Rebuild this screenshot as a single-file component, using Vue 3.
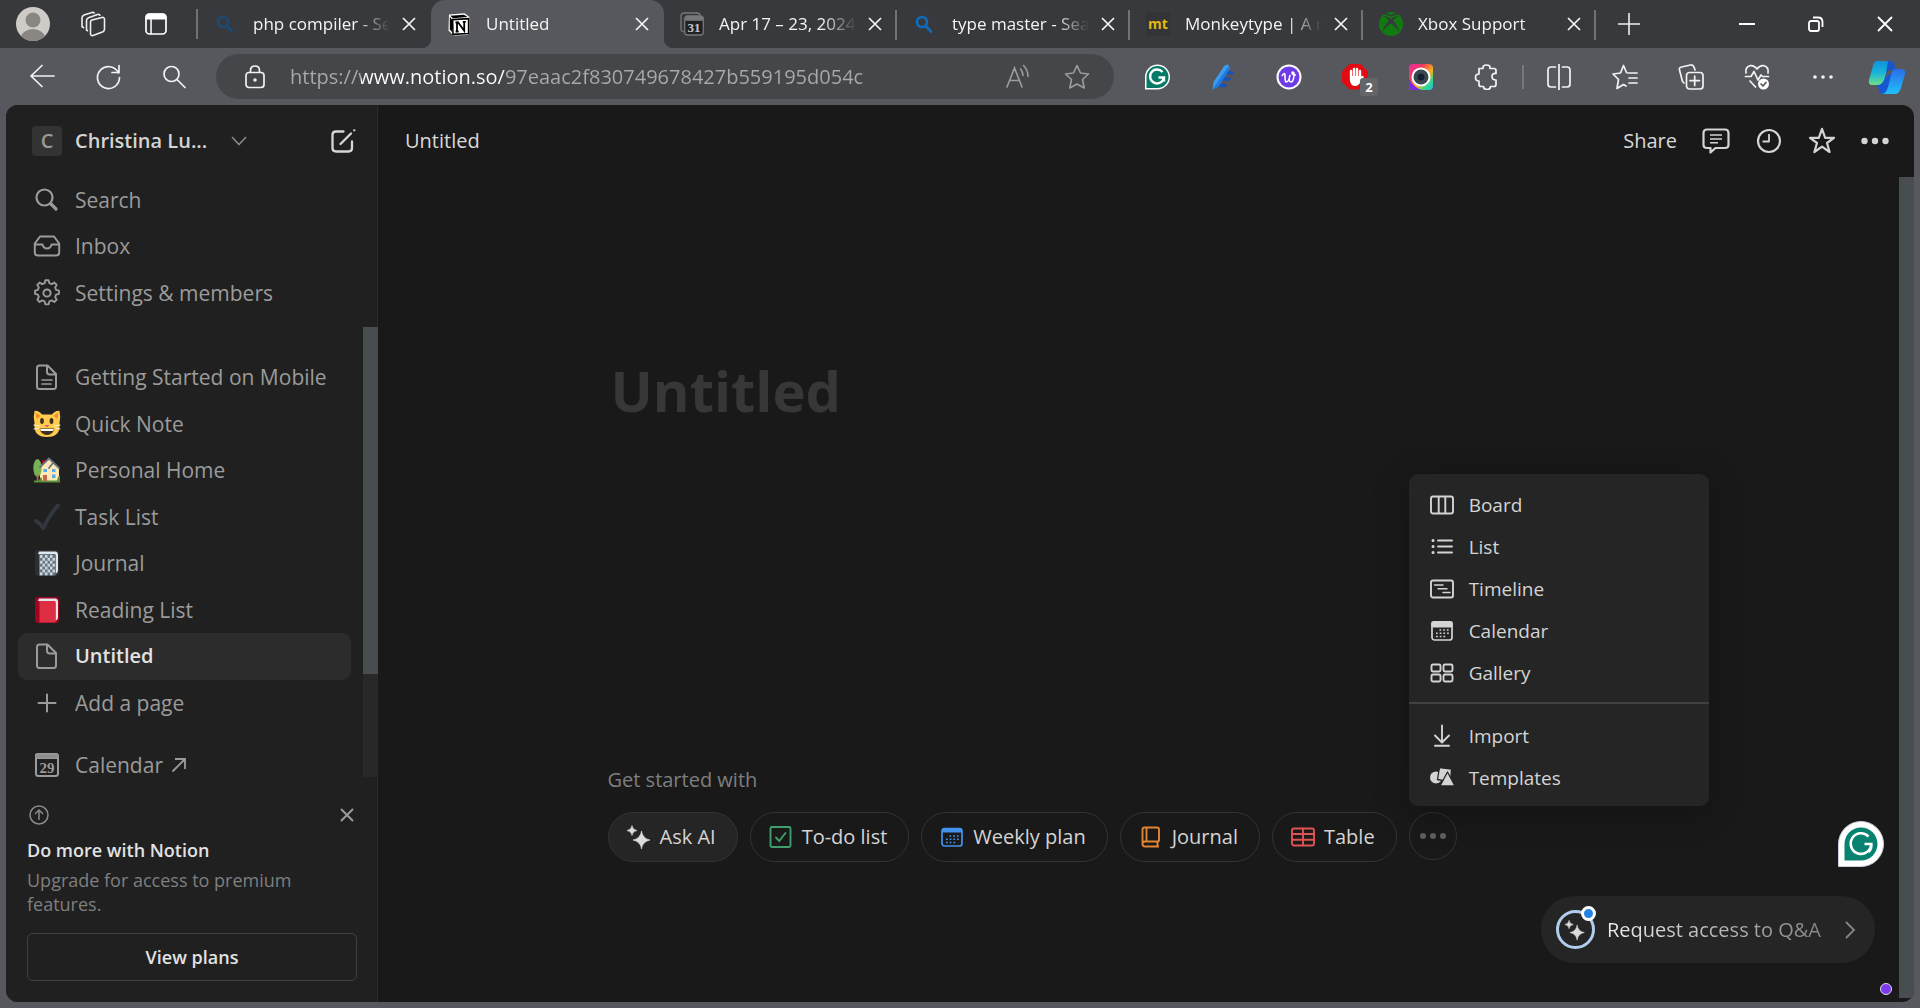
<script setup>
import { ref } from 'vue'

const address = ref('https://www.notion.so/97eaac2f830749678427b559195d054c')

const magnifier = (c) =>
  `<g fill="none" stroke="${c}" stroke-width="2.6" stroke-linecap="round"><circle cx="9" cy="10" r="5"/><path d="M12.8 14L18 19.5"/></g>`

const tabs = [
  { title: 'php compiler - Search', icon: magnifier('#1d4a75') },
  {
    title: 'Untitled', active: true,
    icon: '<path d="M2 2.5L17.5 1.2L22.5 5V21.5L20.5 23L6.5 23.5L1.5 18.5Z" fill="#fff"/><path d="M3.2 3.8L17 2.7L20.5 5L6 6.2Z" fill="#000"/><path d="M5.6 7.6L21.6 6.6V21.6L6 22.4Z" fill="#fff" stroke="#000" stroke-width="1.6"/><path d="M2.8 5L5 7.5V20L2.8 17.5Z" fill="#000"/><path d="M8.5 10.5L11 10.2L17.2 18.8V10.2M10 10.5V19.4M8.6 19.5H11.6M15.8 9.9H18.8M17.2 19V10" fill="none" stroke="#000" stroke-width="1.8"/>',
  },
  {
    title: 'Apr 17 – 23, 2024 · Calendar',
    icon: '<g fill="none" stroke="#77787b" stroke-width="1.3"><path d="M4 20L2.5 19.5Q1 19 1 17V4Q1 1 4 1H17Q20 1 20 3.5"/><rect x="4.7" y="4" width="18.6" height="19" rx="3" fill="#202124"/><path d="M5 8H23"/></g><rect x="5" y="4" width="18" height="4.5" rx="2" fill="#77787b"/><text x="14" y="20" text-anchor="middle" font-family="Liberation Serif" font-weight="700" font-size="13" fill="#c8c8ca">31</text>',
  },
  { title: 'type master - Search', icon: magnifier('#0f6cbd') },
  {
    title: 'Monkeytype | A minimalistic typing test',
    icon: '<rect width="24" height="24" rx="4" fill="#323437"/><text x="12" y="17" text-anchor="middle" font-family="Open Sans" font-weight="700" font-size="14" fill="#e2b714">mt</text>',
  },
  {
    title: 'Xbox Support',
    icon: '<circle cx="12" cy="12" r="12" fill="#107c10"/><path d="M5.500 2Q9 2 12 4Q15 2 18.500 2" fill="none" stroke="#38393d" stroke-width="1.300"/><path d="M3.400 20.500Q4.500 14 10 8.500Q7 5 4 4.500Q8 3.500 12 6.800Q16 3.500 20 4.500Q17 5 14 8.500Q19.500 14 20.600 20.500Q17.500 15 12 11.500Q6.500 15 3.400 20.500" fill="#38393d"/>',
  },
]

const mainLinks = [
  { label: 'Search', icon: '<circle cx="11.5" cy="11.5" r="8" stroke-width="2.2"/><path d="M18 18L23 23" stroke-width="3.2"/>' },
  { label: 'Inbox', icon: '<path d="M7 4.5H21L26.2 11.5V20.5Q26.2 23.5 23 23.5H5Q1.8 23.5 1.8 20.5V11.5ZM2 12.5H9.5Q10.5 16.5 14 16.5T18.500 12.5H26" stroke-width="2"/>' },
  { label: 'Settings & members', icon: '<path d="M12.300 2h3.400l.8 3.100 2.500 1 2.800-1.600 2.400 2.400-1.600 2.800 1 2.500 3 .8v3.400l-3 .8-1 2.500 1.600 2.800-2.400 2.400-2.800-1.600-2.500 1-.8 3.100h-3.400l-.8-3.100-2.500-1-2.800 1.600-2.400-2.400 1.600-2.800-1-2.500-3-.8v-3.400l3-.8 1-2.500-1.600-2.800 2.400-2.400 2.800 1.600 2.500-1z" transform="translate(.7 -.7) scale(.95)" stroke-width="2"/><circle cx="14" cy="14" r="3.600" stroke-width="2"/>' },
]

const sheet = '<path d="M7 2.500H14.500L23 11V23.500Q23 26 20.500 26H6.500Q4 26 4 23.500V5Q4 2.500 6.500 2.500ZM14 3V8.500Q14 11.500 16.500 11.500H22.500" stroke-width="2"/>'
const book = (dark, cover, fill) =>
  `<rect x="2" y="1" width="24" height="26" rx="3" fill="${dark}" stroke="none"/><path d="M6 2.500H22Q25 2.500 25 6V22Q24.500 24 22.500 25V6Q22.500 5 21 5H5Z" fill="#e1e8ed" stroke="none"/><path d="M6 5H20.500Q22.500 5 22.500 7V26.500H6Z" fill="${cover}" stroke="none"/>${fill}`
const checker = Array.from({ length: 42 }, (_, i) =>
  i % 2 ? '' : `<rect x="${7 + ((i % 6) + (Math.floor(i / 6) % 2)) * 2.5}" y="${6 + Math.floor(i / 6) * 2.900}" width="2.500" height="2.900" fill="#ccd6dd" stroke="none"/>`).join('')

const pages = [
  { label: 'Getting Started on Mobile', icon: sheet + '<path d="M9 17H19M9 21H18" stroke-width="1.700"/>' },
  {
    label: 'Quick Note',
    icon: '<g stroke="none"><path d="M1.500 1Q5 0 9 4.500H19Q23 0 26.500 1Q28 7 26.500 13Q28 27 14 27T1.500 13Q0 7 1.500 1Z" fill="#ffcc4d"/><path d="M2.500 3Q5 3.500 7.500 6L3.500 9ZM25.500 3Q23 3.500 20.500 6L24.500 9Z" fill="#f18f26"/><ellipse cx="9" cy="11" rx="1.900" ry="3" fill="#402e1f"/><ellipse cx="18.500" cy="11" rx="1.900" ry="3" fill="#402e1f"/><path d="M11.500 15H16.500L14 17.500Z" fill="#e75a70"/><path d="M6.500 18.500H21.500Q20 25 14 25T6.500 18.500Z" fill="#402e1f"/><path d="M7 19H21L20 21H8Z" fill="#fff"/></g><path d="M1 15L7 16M1 19L6 18M27 15L21 16M27 19L22 18" stroke="#fff3d0" stroke-width="1"/>',
  },
  {
    label: 'Personal Home',
    icon: '<g stroke="none"><rect x="9" y="4" width="3" height="7" fill="#a0041e"/><path d="M7 12L16 3L26 12V25H7Z" fill="#ffe8b6"/><ellipse cx="4.500" cy="12" rx="4.200" ry="9" fill="#77b255"/><rect x="3.800" y="18" width="1.600" height="8" fill="#c1694f"/><path d="M1 24.500H27V26.500H1Z" fill="#5c913b"/><rect x="10" y="19" width="4" height="6" fill="#c1694f"/><path d="M10.500 13H14V16H10.500ZM19 13H22.500V16H19ZM19 18.500H22.500V22H19Z" fill="#55acee"/><path d="M24 25Q25 19 27 20V26H24ZM6 25Q7 20 9 22V26H6Z" fill="#5c913b"/></g><path d="M7 11L16 2.500L26 12M20 7L16 12" stroke="#66757f" stroke-width="1.800"/>',
  },
  { label: 'Task List', icon: '<path d="M3 18Q7 20 10.500 25Q16 12 25 2.500" stroke="#31373d" stroke-width="4"/>' },
  { label: 'Journal', icon: book('#292f33', '#66757f', checker) },
  { label: 'Reading List', icon: book('#a0041e', '#dd2e44', '<path d="M6.500 6V26" stroke="#bb1c36" stroke-width="1"/>') },
  { label: 'Untitled', icon: sheet, active: true },
  { label: 'Add a page', icon: '<path d="M14 5.500V22.500M5.500 14H22.500" stroke-width="2"/>' },
]

const calendarIcon = (c) =>
  `<rect x="2" y="3.500" width="20" height="17.500" rx="2.500" fill="none" stroke="${c}" stroke-width="1.700"/><rect x="2" y="3" width="20" height="4.500" rx="1.500" fill="${c}"/><path d="M9.500 11H20M6 14.200H20M6 17.500H16" fill="none" stroke="${c}" stroke-width="1.600" stroke-linecap="butt" stroke-dasharray="1.700 2"/>`

const views = [
  { label: 'Board', icon: '<rect x="1" y="3.500" width="22" height="17" rx="2"/><path d="M8.700 4V20M15.300 4V20"/>' },
  { label: 'List', icon: '<path d="M8 5.500H22M8 11.500H22M8 17.500H22"/><path d="M3 5.500h.1M3 11.500h.1M3 17.500h.1" stroke-width="3"/>' },
  { label: 'Timeline', icon: '<rect x="1" y="3.500" width="22" height="17" rx="2"/><path d="M4.500 8H13M8 11.700H17M13 15.500H20" stroke-width="1.500"/>' },
  { label: 'Calendar', icon: calendarIcon('#d4d4d4') },
  { label: 'Gallery', icon: '<rect x="1.500" y="3.500" width="9" height="7" rx="1.500"/><rect x="13.500" y="3.500" width="9" height="7" rx="1.500"/><rect x="1.500" y="13.500" width="9" height="7" rx="1.500"/><rect x="13.500" y="13.500" width="9" height="7" rx="1.500"/>' },
]
const actions = [
  { label: 'Import', icon: '<path d="M12 1.500V18M5 11.500L12 18.500L19 11.500M5 21.700H19"/>' },
  { label: 'Templates', icon: '<g fill="#d4d4d4" stroke="none"><circle cx="6" cy="11.500" r="6"/><path d="M9.500 1.500L21.500 3L20.500 16L7.500 13.500Z" stroke="#252525" stroke-width="1.300"/><path d="M17.500 6L25 20H10Z" stroke="#252525" stroke-width="1.300"/></g>' },
]

const sparkle = '<path d="M15.500 7Q16.500 14.500 24 16Q16.500 17.500 15.500 25Q14.500 17.500 7 16Q14.500 14.500 15.500 7ZM6 1.500Q6.700 5.800 11 6.500Q6.700 7.200 6 11.500Q5.300 7.200 1 6.500Q5.300 5.800 6 1.500Z" fill="#dcdcdc" stroke="#dcdcdc" stroke-width=".6"/>'
const starters = [
  { label: 'Ask AI', icon: `<g transform="translate(-1 -1)">${sparkle}</g>`, kind: 'filled' },
  { label: 'To-do list', icon: '<g fill="none" stroke="#3f9e6b" stroke-width="1.900" stroke-linecap="round"><rect x="1.500" y="2" width="20" height="20" rx="1.500"/><path d="M7 12.500L10.200 16L16.500 8"/></g>' },
  { label: 'Weekly plan', icon: calendarIcon('#4493ee') },
  { label: 'Journal', icon: '<g fill="none" stroke="#e08535" stroke-width="1.900"><path d="M20 16.500H6Q3.500 16.500 3.500 19T6 21.500H20M18.500 17V21M3.500 19V4.500Q3.500 2.500 5.500 2.500H18Q20 2.500 20 4.500V16.500M7.500 3V16.500"/></g>' },
  { label: 'Table', icon: '<g fill="none" stroke="#df5452" stroke-width="1.900"><rect x="1" y="3.500" width="22" height="17" rx="2"/><path d="M1 9H23M1 14.800H23M12 4V20"/></g>' },
]
</script>

<template>
  <div class="window">
    <header class="tabstrip">
      <div class="tools">
        <button class="plain avatar" aria-label="Profile">
          <svg width="34" height="34" viewBox="0 0 34 34"><clipPath id="face"><circle cx="17" cy="17" r="17" /></clipPath><g clip-path="url(#face)"><rect width="34" height="34" fill="#cfccc8" /><circle cx="17" cy="13" r="7.500" fill="#8a8681" /><ellipse cx="17" cy="32" rx="12.500" ry="10" fill="#8a8681" /></g></svg>
        </button>
        <button class="plain spaces" aria-label="Workspaces">
          <svg width="26" height="26" viewBox="0 0 26 26" fill="none" stroke="#eee" stroke-width="1.600" stroke-linejoin="round"><path d="M10.500 11Q10.500 9.500 12 9L22 6.500Q24.500 6 24.500 8.500V18Q24.500 20 23 20.800L13 24.500Q10.500 25 10.500 22.500ZM8 20L6.500 19V9.500Q6.500 7.500 8.500 6.700L17.500 3.500Q20 3 20 5M4 17L2 15.500V7Q2 5 4 4L12 1.500Q14 1 14.500 2.500" /></svg>
        </button>
        <button class="plain" aria-label="Tab actions">
          <svg width="24" height="24" viewBox="0 0 24 24"><rect x="2" y="2" width="20" height="20" rx="3.500" fill="none" stroke="#fff" stroke-width="1.700" /><path d="M1.500 7.500V5Q1.500 1.500 5 1.500H19Q22.500 1.500 22.500 5V7.500ZM6.300 7H7.800V22H6.300Z" fill="#fff" /></svg>
        </button>
      </div>
      <nav class="tabs">
        <div v-for="(tab, i) in tabs" :key="i" class="tab" :class="{ active: tab.active, quiet: i === 0 }">
          <svg class="favicon" width="24" height="24" viewBox="0 0 24 24" v-html="tab.icon"></svg>
          <span class="tab-title">{{ tab.title }}</span>
          <button class="plain" :aria-label="'Close ' + tab.title">
            <svg width="14" height="14" viewBox="0 0 14 14" stroke="#f4f4f4" stroke-width="1.700"><path d="M1 1L13 13M13 1L1 13" /></svg>
          </button>
        </div>
      </nav>
      <button class="plain new-tab" aria-label="New tab">
        <svg width="22" height="22" viewBox="0 0 22 22" stroke="#eee" stroke-width="1.600"><path d="M11 0V22M0 11H22" /></svg>
      </button>
      <div class="controls">
        <button class="plain" aria-label="Minimize"><svg width="16" height="16" viewBox="0 0 16 16" stroke="#fff" stroke-width="2"><path d="M0 8H16" /></svg></button>
        <button class="plain" aria-label="Restore"><svg width="16" height="16" viewBox="0 0 16 16" fill="none" stroke="#fff" stroke-width="1.800"><rect x="1" y="5" width="10" height="10" rx="2" /><path d="M5 1.500H10Q14.500 1.500 14.500 6V11" /></svg></button>
        <button class="plain" aria-label="Close"><svg width="16" height="16" viewBox="0 0 16 16" stroke="#fff" stroke-width="1.800"><path d="M1 1L15 15M15 1L1 15" /></svg></button>
      </div>
    </header>

    <div class="toolbar">
      <button class="plain tool" aria-label="Back"><svg width="26" height="26" viewBox="0 0 26 26" class="line"><path d="M25 12H2M13 1.500L2 12L13 22.500" /></svg></button>
      <button class="plain tool" aria-label="Refresh"><svg width="26" height="26" viewBox="0 0 26 26" class="line"><path d="M23.500 9A11 11 0 1 0 24.500 13.500M24 1.500V8.500H17" /></svg></button>
      <button class="plain tool" aria-label="Search"><svg width="26" height="26" viewBox="0 0 26 26" class="line"><circle cx="10.500" cy="10" r="7.500" /><path d="M16 15.500L24 23.500" /></svg></button>
      <div class="address">
        <svg width="24" height="24" viewBox="0 0 24 24" fill="none" stroke="#f2f2f2" stroke-width="1.700"><rect x="3" y="7.500" width="18" height="15" rx="3" /><path d="M7.500 7V5.500Q7.500 1 12 1T16.500 5.500V7" /><circle cx="12" cy="15" r=".9" fill="#f2f2f2" /></svg>
        <input v-model="address" aria-label="Address" class="url" type="text" spellcheck="false" />
        <button class="plain" aria-label="Read aloud"><svg width="26" height="26" viewBox="0 0 26 26" fill="none" stroke="#9b9c9e" stroke-width="1.600" stroke-linecap="round"><path d="M2 23L9.500 4L17 23M4.500 16.500H14.500M15.500 5Q18 8 18 11.500M18.500 1.500Q23 6 23 12.500" /></svg></button>
        <button class="plain star" aria-label="Add favorite"><svg width="26" height="26" viewBox="0 0 26 26" fill="none" stroke="#9b9c9e" stroke-width="1.600" stroke-linejoin="round"><path d="M13 1.500L16.500 9L24.500 10L18.500 15.500L20.200 24L13 20L5.800 24L7.500 15.500L1.500 10L9.500 9Z" /></svg></button>
      </div>
      <div class="extensions">
        <button class="plain tool" aria-label="Grammarly"><svg width="26" height="26" viewBox="0 0 26 26"><path d="M1 25.500V13A12.500 12.500 0 1 1 13.500 25.500Z" fill="#fff" /><path d="M2.500 24V13A11 11 0 1 1 13.500 24Z" fill="#077a67" /><path d="M18.500 8A7 7 0 1 0 20 13.500H14.500M20 13.500V17.500" fill="none" stroke="#fff" stroke-width="2.400" /></svg></button>
        <button class="plain tool" aria-label="Writing assistant"><svg width="26" height="26" viewBox="0 0 26 26"><path d="M14 9H22M12 15H19M9 21.500H15" stroke="#1653b8" stroke-width="3.500" stroke-linecap="round" /><path d="M14.500 1.500L18 .5L20 4L8.500 22.500L2.500 25.500L3.500 18Z" fill="#3c9cf0" /><path d="M18.500 2L20 4L8.500 22.500L2.500 25.500Z" fill="#1f7be0" /></svg></button>
        <button class="plain tool" aria-label="Wordtune"><svg width="26" height="26" viewBox="0 0 26 26"><circle cx="13" cy="13" r="12.500" fill="#fff" /><circle cx="13" cy="13" r="10.500" fill="#6d3be8" /><path d="M6 12Q9 7 9 12T10 18Q13 18 14 11Q12 18 15 18T18 9Q16 7 16 9T20 11" fill="none" stroke="#fff" stroke-width="1.600" /></svg></button>
        <button class="plain tool blocker" aria-label="AdBlock, 2 blocked">
          <svg width="26" height="26" viewBox="0 0 26 26"><path d="M7.500 0H18.500L26 7.500V18L18.500 25.500H7.500L0 18V7.500Z" fill="#e30b12" /><path d="M9 15V7M12 13V5M15 13V5M18 14V7M18 17L20.500 13" stroke="#fff" stroke-width="2.400" stroke-linecap="round" /><path d="M8 12H19V17Q17 22 13 22T8 17Z" fill="#fff" /></svg>
          <span class="count">2</span>
        </button>
        <button class="plain tool" aria-label="Camera"><svg width="26" height="26" viewBox="0 0 26 26"><defs><linearGradient id="rainbow" x1="0" y1="0" x2="1" y2="1"><stop offset="0" stop-color="#f02ba8" /><stop offset=".3" stop-color="#f0385c" /><stop offset=".6" stop-color="#f5b21e" /><stop offset=".8" stop-color="#30d890" /><stop offset="1" stop-color="#20b8f0" /></linearGradient></defs><rect x="1" width="24" height="26" rx="4" fill="url(#rainbow)" /><path d="M1 15Q6 24 14 26H5Q1 26 1 22Z" fill="#7a2be8" /><circle cx="13" cy="13" r="9.500" fill="#fff" /><circle cx="13" cy="13" r="7.500" fill="#3a4650" /><circle cx="13" cy="13" r="3.500" fill="#14202c" /></svg></button>
        <button class="plain tool" aria-label="Extensions"><svg width="26" height="26" viewBox="0 0 26 26" class="line"><path d="M5 4.500H9Q8.500 1 12.500 1T16 4.500H20Q22 4.500 22 6.500V9.500Q18 9 18 12.500T22 16V20.500Q22 22.500 20 22.500H16.500Q16.500 25.500 13 25.500T9.500 22.500H7Q5 22.500 5 20.500V17Q1.500 17 1.500 13.500T5 10Z" /></svg></button>
        <span class="rule"></span>
        <button class="plain tool" aria-label="Split screen"><svg width="26" height="26" viewBox="0 0 26 26" class="line"><path d="M9.500 3H5Q2 3 2 6V20Q2 23 5 23H9.500M16.500 3H21Q24 3 24 6V20Q24 23 21 23H16.500M13 0V26" /></svg></button>
        <button class="plain tool" aria-label="Favorites"><svg width="26" height="26" viewBox="0 0 26 26" class="line"><path d="M16 9H25M17 14H25M17 19H25M14.500 8.500L11.500 1.500L8.500 9L1 10L6.500 15.500L5 24.500L11.500 20.500L14 22" /></svg></button>
        <button class="plain tool" aria-label="Collections"><svg width="26" height="26" viewBox="0 0 26 26" class="line"><path d="M6 19L4.500 17.500L1.500 6Q1 3.500 3.500 3L12.500 1Q15 .5 16 3L17 6" /><rect x="8.500" y="8.500" width="16.500" height="16.500" rx="3" /><path d="M16.700 12V21.500M12 16.700H21.500" /></svg></button>
        <button class="plain tool" aria-label="Browser essentials"><svg width="26" height="26" viewBox="0 0 26 26" class="line"><path d="M2 9Q1 3 6 1.700Q10 1 13 5Q16 1 20 1.700Q25 3 24 9M1.500 12.500H7L10 7.500L14 16L17 11L18.500 12.500H24.500M6 17L11.500 23" /><circle cx="19.500" cy="20" r="5.500" fill="#fff" stroke="none" /><path d="M17 20L19 22L22 18.500" stroke="#57585d" /></svg></button>
        <button class="plain tool" aria-label="More"><svg width="26" height="26" viewBox="0 0 26 26" fill="#f2f2f2"><circle cx="5" cy="13" r="1.800" /><circle cx="13" cy="13" r="1.800" /><circle cx="21" cy="13" r="1.800" /></svg></button>
      </div>
      <button class="plain copilot" aria-label="Copilot"><svg width="38" height="34" viewBox="0 0 38 34"><defs><linearGradient id="c1" x1="0" y1="0" x2="0" y2="1"><stop offset="0" stop-color="#1291dc" /><stop offset=".5" stop-color="#18b5d8" /><stop offset="1" stop-color="#70e085" /></linearGradient><linearGradient id="c2" x1="0" y1="0" x2="0" y2="1"><stop offset="0" stop-color="#2b6ce8" /><stop offset="1" stop-color="#20c0fa" /></linearGradient></defs><path d="M12 20L26 12L18 34H14Q12 34 11 30L9 25Z" fill="#1757d0" /><path d="M9 1H25Q22 1 20 8L16 20Q14 25 9 25H4Q0 25 1 20L5 6Q6 1 9 1Z" fill="url(#c1)" /><path d="M20 1Q25 0 26.500 5L28 10H21L18 14Z" fill="#1656c8" /><path d="M27 9H33Q38 9 37 14L33 28Q31 34 27 34H14Q18 34 20 27L23 15Q24 9 27 9Z" fill="url(#c2)" /></svg></button>
    </div>

    <div class="app">
      <aside class="sidebar">
        <div class="workspace">
          <span class="badge">C</span>
          <button class="plain name">Christina Lu...
            <svg width="16" height="10" viewBox="0 0 16 10" fill="none" stroke="#858585" stroke-width="1.700"><path d="M1 1L8 8.500L15 1" /></svg>
          </button>
          <button class="plain compose" aria-label="New page"><svg width="26" height="26" viewBox="0 0 26 26" fill="none" stroke="#d6d6d6" stroke-width="2.300" stroke-linecap="round"><path d="M13.500 3.500H6Q2.500 3.500 2.500 7V20Q2.500 23.500 6 23.500H18.500Q22 23.500 22 20V13.500M10.500 16L21 5.500M24.200 2.300h.1" /></svg></button>
        </div>
        <nav class="links primary">
          <a v-for="l in mainLinks" :key="l.label" href="#" class="link"><svg width="28" height="28" viewBox="0 0 28 28" v-html="l.icon"></svg>{{ l.label }}</a>
        </nav>
        <div class="scroller">
          <div class="scroll-body">
            <nav class="links pages">
              <a v-for="l in pages" :key="l.label" href="#" class="link" :class="{ current: l.active }"><svg width="28" height="28" viewBox="0 0 28 28" v-html="l.icon"></svg>{{ l.label }}</a>
            </nav>
            <a href="#" class="link calendar">
              <svg width="28" height="28" viewBox="0 0 28 28"><rect x="3" y="3" width="22" height="22" rx="2.500" stroke-width="2" /><path d="M3 3H25V7.500H3Z" fill="#8f8f8f" /><text x="14" y="21.500" text-anchor="middle" font-family="Liberation Serif" font-weight="700" font-size="15" fill="#9b9b9b" stroke="none">29</text></svg>
              Calendar
              <svg class="out" width="16" height="16" viewBox="0 0 16 16"><path d="M1.500 14.500L14 2M4 2H14V12" stroke-width="1.800" stroke-linecap="butt" stroke-linejoin="miter" /></svg>
            </a>
          </div>
          <div class="track"><div class="thumb"></div></div>
        </div>
        <section class="upsell">
          <div class="upsell-top">
            <svg width="20" height="20" viewBox="0 0 20 20" fill="none" stroke="#8a8a8a" stroke-width="1.500"><circle cx="10" cy="10" r="9" /><path d="M10 15V5.500M6 9L10 5L14 9" /></svg>
            <button class="plain" aria-label="Dismiss"><svg width="14" height="14" viewBox="0 0 14 14" stroke="#9b9b9b" stroke-width="2"><path d="M1 1L13 13M13 1L1 13" /></svg></button>
          </div>
          <h2>Do more with Notion</h2>
          <p>Upgrade for access to premium features.</p>
          <button class="plans">View plans</button>
        </section>
      </aside>

      <main class="main">
        <header class="page-head">
          <a href="#" class="crumb">Untitled</a>
          <button class="plain share">Share</button>
          <button class="plain head-icon" aria-label="Comments"><svg width="28" height="28" viewBox="0 0 28 28"><path d="M5 2.500H23Q26.500 2.500 26.500 6V18Q26.500 21 23 21H13.500L8.500 25.500V21H5Q1.500 21 1.500 18V6Q1.500 2.500 5 2.500Z" stroke-width="2.200" /><path d="M8 8H20M8 12H20M8 15.700H16" stroke-width="1.500" /></svg></button>
          <button class="plain head-icon" aria-label="Updates"><svg width="28" height="28" viewBox="0 0 28 28"><circle cx="14" cy="14" r="11" stroke-width="2.200" /><path d="M14 7V14.500H7.500" stroke-width="1.800" /></svg></button>
          <button class="plain head-icon" aria-label="Favorite"><svg width="28" height="28" viewBox="0 0 28 28"><path d="M14 1.800L17.200 10.800H26L19 16L21.600 25L14 19.600L6.400 25L9 16L2 10.800H10.800Z" stroke-width="2.200" /></svg></button>
          <button class="plain head-icon" aria-label="More options"><svg width="28" height="28" viewBox="0 0 28 28" class="dots"><circle cx="3.500" cy="14" r="3.200" /><circle cx="14" cy="14" r="3.200" /><circle cx="24.500" cy="14" r="3.200" /></svg></button>
        </header>
        <div class="page">
          <article class="page-body">
            <h1>Untitled</h1>
            <section class="start">
              <p>Get started with</p>
              <div class="pills">
                <button v-for="s in starters" :key="s.label" class="pill" :class="s.kind"><svg width="24" height="24" viewBox="0 0 24 24" v-html="s.icon"></svg>{{ s.label }}</button>
                <div class="more">
                  <button class="more-btn" aria-label="More templates"><svg width="26" height="6" viewBox="0 0 26 6" fill="#5f5f5f"><circle cx="3" cy="3" r="3" /><circle cx="13" cy="3" r="3" /><circle cx="23" cy="3" r="3" /></svg></button>
                  <div class="menu">
                    <button v-for="v in views" :key="v.label" class="plain item"><svg width="24" height="24" viewBox="0 0 24 24" v-html="v.icon"></svg>{{ v.label }}</button>
                    <hr />
                    <button v-for="a in actions" :key="a.label" class="plain item"><svg width="24" height="24" viewBox="0 0 24 24" v-html="a.icon"></svg>{{ a.label }}</button>
                  </div>
                </div>
              </div>
            </section>
          </article>
          <div class="page-thumb"></div>
          <div class="floating">
            <button class="plain grammar" aria-label="Grammarly"><svg width="46" height="46" viewBox="0 0 46 46"><path d="M.5 45.500V23A22.500 22.500 0 1 1 23 45.500Z" fill="#fff" stroke="#ccd0dc" /><path d="M6.500 39.500V23A16.500 16.500 0 1 1 23 39.500Z" fill="#078270" /><path d="M30.500 15.500A10.300 10.300 0 1 0 33.300 23H26.500M33.300 22.500Q34 28 30.500 31" fill="none" stroke="#fff" stroke-width="2.600" /></svg></button>
            <button class="qa">
              <span class="ring"><svg width="22" height="22" viewBox="0 0 26 26" v-html="sparkle"></svg></span>
              <span class="qa-text">Request access to Q&amp;A</span>
              <svg width="12" height="20" viewBox="0 0 12 20" fill="none" stroke="#858585" stroke-width="1.800"><path d="M2 2L10 10L2 18" /></svg>
            </button>
            <span class="dot"></span>
          </div>
        </div>
      </main>
    </div>
  </div>
</template>

<style>
body { background: #57585d; }
</style>

<style scoped>
.window { min-height: 100vh; display: flex; flex-direction: column; background: #57585d; color: #9b9b9b; font: 20px/28px "Open Sans", "Noto Sans", sans-serif; box-sizing: border-box; }
.window *, .window *::after { box-sizing: border-box; }
svg { display: block; flex: none; }
button { font: inherit; color: inherit; cursor: pointer; }
.plain { background: none; border: 0; padding: 0; display: flex; align-items: center; justify-content: center; }
a { color: inherit; text-decoration: none; }
p, h1, h2 { margin: 0; }

.tabstrip { height: 48px; display: flex; align-items: center; background: #38393d; }
.tools { width: 198px; height: 30px; flex: none; display: flex; align-items: center; padding-left: 16px; border-right: 2px solid #717276; }
.spaces { margin: 0 38px 0 30px; }
.tabs { flex: 1; min-width: 0; display: flex; align-self: stretch; }
.tab { flex: 1; min-width: 0; position: relative; display: flex; align-items: center; padding: 0 15px 0 16px; color: #f4f4f4; font-size: 17px; }
.tab::after { content: ""; position: absolute; right: 0; top: 10px; height: 30px; width: 2px; background: #717276; }
.quiet::after { display: none; }
.tab.active { background: #57585d; border-radius: 14px 14px 0 0; }
.tab.active::before, .tab.active::after { content: ""; position: absolute; top: auto; bottom: 0; width: 10px; height: 10px; }
.tab.active::before { left: -10px; background: radial-gradient(circle at 0 0, transparent 10px, #57585d 11px); }
.tab.active::after { right: -10px; background: radial-gradient(circle at 100% 0, transparent 10px, #57585d 11px); }
.tab-title { flex: 1; min-width: 0; margin: 0 12px 0 15px; overflow: hidden; white-space: nowrap; -webkit-mask-image: linear-gradient(to right, #000 calc(100% - 34px), transparent); mask-image: linear-gradient(to right, #000 calc(100% - 34px), transparent); }
.new-tab { margin-left: 22px; }
.controls { flex: none; display: flex; gap: 53px; margin-left: 99px; padding-right: 27px; }

.toolbar { height: 57px; display: flex; align-items: center; padding: 0 14px 0 9px; }
.line { fill: none; stroke: #f2f2f2; stroke-width: 1.700; stroke-linecap: round; stroke-linejoin: round; }
.tool { width: 66px; flex: none; position: relative; }
.address { flex: 1; min-width: 0; height: 45px; margin-left: 9px; padding: 0 24px 0 27px; display: flex; align-items: center; border-radius: 23px; background: #454649; }
.url { flex: 1; min-width: 0; margin-left: 23px; padding: 0; border: 0; outline: 0; font: 20px/28px "Open Sans", "Noto Sans", sans-serif; color: transparent; background: linear-gradient(to right, #a9aaac 71px, #fff 71px 215px, #a9aaac 215px); -webkit-background-clip: text; background-clip: text; }
.star { margin-left: 33px; }
.extensions { flex: none; display: flex; align-items: center; margin-left: 10px; }
.rule { width: 2px; height: 24px; margin: 0 2px; background: #77787c; }
.count { position: absolute; left: 38px; top: 14px; width: 18px; height: 18px; border-radius: 3px; background: #646568; color: #fff; font-size: 13px; font-weight: 700; line-height: 18px; }
.copilot { margin-left: 12px; }

.app { flex: 1; display: flex; margin: 0 6px 6px; border-radius: 12px; overflow: hidden; background: #191919; }
.sidebar { width: 372px; flex: none; display: flex; flex-direction: column; background: #202020; border-right: 1px solid #2a2a2a; }
.workspace { height: 72px; display: flex; align-items: center; padding: 0 21px 0 26px; }
.badge { width: 30px; height: 30px; border-radius: 4px; background: #333; text-align: center; line-height: 30px; font-weight: 600; }
.name { margin-left: 13px; font-weight: 600; color: #d4d4d4; gap: 24px; font-size: 20px; }
.compose { margin-left: auto; }
.links { display: flex; flex-direction: column; }
.primary { min-height: 139px; }
.primary .link, .pages .link { flex: 1; }
.link { display: flex; align-items: center; gap: 14px; margin: 0 12px; padding-left: 15px; border-radius: 9px; font-size: 21px; font-weight: 500; line-height: 24px; }
.link svg { fill: none; stroke: #9b9b9b; stroke-linecap: round; stroke-linejoin: round; }
.link .out { margin-left: -6px; }
.scroller { display: flex; margin: 11px -1px 0 0; position: relative; }
.scroll-body { flex: 1; padding-top: 27px; }
.pages { min-height: 372px; }
.link.current { background: #2c2c2c; color: #e2e2e2; font-weight: 600; font-size: 20px; }
.calendar { height: 24px; margin-top: 27px; }
.track { width: 15px; background: #282828; flex: none; }
.thumb { height: 347px; background: #484d50; }
.upsell { flex: 1; padding: 0 20px 21px 21px; display: flex; flex-direction: column; }
.upsell-top { display: flex; align-items: center; justify-content: space-between; height: 20px; margin-top: 28px; padding: 0 3px 0 2px; }
.upsell h2 { margin-top: 13px; font-size: 18px; line-height: 24px; font-weight: 600; color: #e2e2e2; }
.upsell p { margin-top: 6px; font-size: 18px; line-height: 24px; color: #7f7f7f; }
.plans { height: 48px; margin-top: auto; border: 1px solid #404040; border-radius: 6px; background: none; color: #e2e2e2; font-size: 18px; font-weight: 600; }

.main { flex: 1; min-width: 0; display: flex; flex-direction: column; }
.page-head { height: 72px; display: flex; align-items: center; padding: 0 25px 0 27px; color: #d8d8d8; font-size: 20px; }
.crumb { margin-right: auto; }
.head-icon { margin-left: 25px; }
.head-icon svg { fill: none; stroke: #d4d4d4; stroke-linejoin: round; }
.head-icon .dots { fill: #d4d4d4; stroke: none; }
.page { flex: 1; position: relative; display: flex; justify-content: center; padding: 0 15px 0 0; }
.page-body { width: 1062px; display: flex; flex-direction: column; padding: 173px 0 140px; }
h1 { font-size: 56px; line-height: 80px; font-weight: 700; color: #373737; padding-left: 3px; }
.start { margin-top: auto; }
.start p { margin-bottom: 18px; font-size: 20px; color: #7f7f7f; }
.pills { display: flex; gap: 12px; }
.pill { height: 50px; display: flex; align-items: center; gap: 9px; padding: 0 21px 0 18px; border: 1px solid #333; border-radius: 25px; background: none; color: #d4d4d4; font-size: 20px; white-space: nowrap; }
.filled { background: #252525; }
.more { position: relative; }
.more-btn { width: 48px; height: 48px; display: flex; align-items: center; justify-content: center; border: 1px solid #333; border-radius: 24px; background: none; padding: 0; }
.menu { position: absolute; left: 0; bottom: calc(100% + 6px); width: 300px; padding: 10px 0 7px; border-radius: 9px; background: #252525; box-shadow: 0 6px 36px rgba(0, 0, 0, .3); }
.item { width: 100%; height: 42px; justify-content: flex-start; gap: 15px; padding-left: 21px; font-size: 19px; color: #d4d4d4; }
.item svg { fill: none; stroke: #d4d4d4; stroke-width: 1.900; stroke-linecap: round; stroke-linejoin: round; }
hr { height: 2px; margin: 8px 0 11px; border: 0; background: #404040; }
.page-thumb { position: absolute; right: 0; top: 0; bottom: 4px; width: 15px; background: #484d50; }
.floating { position: absolute; right: 22px; bottom: 7px; display: flex; flex-direction: column; align-items: flex-end; }
.grammar { margin: 0 8px 29px 0; }
.qa { height: 67px; display: flex; align-items: center; margin: 0 17px 20px 0; padding: 0 19px 0 15px; border: 0; border-radius: 34px; background: #252525; }
.ring { width: 39px; height: 39px; display: flex; align-items: center; justify-content: center; position: relative; border: 3px solid #b0cdee; border-radius: 50%; }
.ring::after { content: ""; position: absolute; right: -4px; top: -7px; width: 15px; height: 15px; border: 3px solid #fff; border-radius: 50%; background: #2383e2; }
.qa-text { margin: 0 23px 0 12px; font-size: 20px; font-weight: 500; color: transparent; background: linear-gradient(to right, #eee, #858585); -webkit-background-clip: text; background-clip: text; }
.dot { width: 12px; height: 12px; border: 1px solid #ddd; border-radius: 50%; background: #7c3aed; }
</style>
